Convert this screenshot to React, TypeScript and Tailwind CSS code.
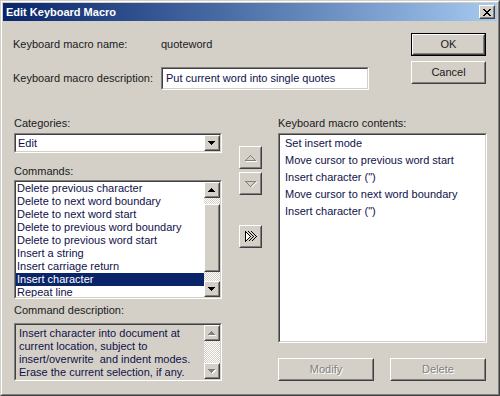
import React from "react";

const font = "font-['Liberation_Sans',Arial,sans-serif]";

function Sunken({ className = "", inner = "", children }: { className?: string; inner?: string; children?: React.ReactNode }) {
  return (
    <div className={`border border-t-[#808080] border-l-[#808080] border-b-white border-r-white ${className}`}>
      <div className={`h-full w-full border border-t-[#404040] border-l-[#404040] border-b-[#d4d0c8] border-r-[#d4d0c8] ${inner}`}>
        {children}
      </div>
    </div>
  );
}

function Raised({ className = "", children }: { className?: string; children?: React.ReactNode }) {
  return (
    <div className={`border border-t-white border-l-white border-b-[#404040] border-r-[#404040] bg-[#d4d0c8] ${className}`}>
      <div className="flex h-full w-full items-center justify-center border border-t-[#d4d0c8] border-l-[#d4d0c8] border-b-[#808080] border-r-[#808080]">
        {children}
      </div>
    </div>
  );
}

function SmallArrow({ dir, disabled }: { dir: "up" | "down"; disabled?: boolean }) {
  const rows = dir === "down" ? [0, 1, 2, 3] : [3, 2, 1, 0];
  const tri = (color: string, dx: number, dy: number) =>
    rows.map((r, i) => <rect key={color + i} x={r + dx} y={i + dy} width={7 - r * 2} height={1} fill={color} />);
  return (
    <svg width="8" height="5" shapeRendering="crispEdges">
      {disabled && tri("#ffffff", 1, 1)}
      {tri(disabled ? "#808080" : "#000000", 0, 0)}
    </svg>
  );
}

const checker =
  "bg-[repeating-conic-gradient(#ffffff_0_25%,#d4d0c8_0_50%)] bg-[length:2px_2px]";

const commands = [
  "Delete previous character",
  "Delete to next word boundary",
  "Delete to next word start",
  "Delete to previous word boundary",
  "Delete to previous word start",
  "Insert a string",
  "Insert carriage return",
  "Insert character",
  "Repeat line",
];

const contents = [
  "Set insert mode",
  "Move cursor to previous word start",
  "Insert character (\")",
  "Move cursor to next word boundary",
  "Insert character (\")",
];

export default function App() {
  return (
    <div className={`${font} h-[396px] w-[500px] select-none border border-t-[#d4d0c8] border-l-[#d4d0c8] border-b-[#404040] border-r-[#404040] bg-[#d4d0c8] text-[11px] leading-[13px] text-[#1a1a1a]`}>
      <div className="flex h-full flex-col border border-t-white border-l-white border-b-[#808080] border-r-[#808080] p-px">
        {/* title bar */}
        <div className="flex h-[18px] items-center bg-gradient-to-r from-[#0a246a] to-[#a6caf0] pl-[3px] pr-[2px]">
          <span className="font-bold text-white">Edit Keyboard Macro</span>
          <Raised className="ml-auto h-[14px] w-[16px]">
            <svg width="8" height="7" shapeRendering="crispEdges">
              <path d="M0 0h2l2 2.5L6 0h2L5 3.5 8 7H6L4 4.5 2 7H0l3-3.5z" fill="#000" />
            </svg>
          </Raised>
        </div>

        <div className="flex-1 px-[10px]">
          {/* top section */}
          <div className="flex">
            <div className="flex flex-col pt-[17px]">
              <div className="flex">
                <span className="w-[148px]">Keyboard macro name:</span>
                <span>quoteword</span>
              </div>
              <div className="mt-[16px] flex items-center">
                <span className="w-[148px]">Keyboard macro description:</span>
                <Sunken className="h-[23px] w-[208px] bg-white" inner="flex items-center pl-[3px] text-[#10104a]">
                  Put current word into single quotes
                </Sunken>
              </div>
            </div>
            <div className="ml-auto mr-px flex flex-col pt-[12px]">
              <div className="h-[23px] w-[75px] border border-black">
                <Raised className="h-full w-full">OK</Raised>
              </div>
              <Raised className="mt-[5px] h-[23px] w-[75px]">Cancel</Raised>
            </div>
          </div>

          {/* lower section */}
          <div className="mt-[27px] flex">
            <div className="ml-px flex w-[208px] flex-col">
              <span>Categories:</span>
              <Sunken className="mt-[3px] h-[20px] bg-white" inner="flex items-center">
                <span className="flex-1 pl-[2px] text-[#10104a]">Edit</span>
                <Raised className="h-full w-[16px]">
                  <SmallArrow dir="down" />
                </Raised>
              </Sunken>

              <span className="mt-[12px]">Commands:</span>
              <Sunken className="mt-[2px] h-[119px] bg-white" inner="flex">
                <div className="flex-1 overflow-hidden text-[#10104a]">
                  {commands.map((c) => (
                    <div
                      key={c}
                      className={`h-[13px] whitespace-nowrap pl-px ${c === "Insert character" ? "bg-[#0a246a] text-white" : ""}`}
                    >
                      {c}
                    </div>
                  ))}
                </div>
                <div className="flex w-[16px] flex-col">
                  <Raised className="h-[16px] w-full">
                    <SmallArrow dir="up" />
                  </Raised>
                  <div className={`h-[6px] ${checker}`} />
                  <Raised className="h-[68px] w-full" />
                  <div className={`flex-1 ${checker}`} />
                  <Raised className="h-[16px] w-full">
                    <SmallArrow dir="down" />
                  </Raised>
                </div>
              </Sunken>

              <span className="mt-[5px]">Command description:</span>
              <Sunken className="mt-[6px] h-[58px]" inner="flex">
                <div className="flex-1 whitespace-pre pl-[3px] pt-[2px] text-[#10104a]">
                  {"Insert character into document at\ncurrent location, subject to\ninsert/overwrite  and indent modes.\nErase the current selection, if any."}
                </div>
                <div className="flex w-[16px] flex-col">
                  <Raised className="h-[16px] w-full">
                    <SmallArrow dir="up" disabled />
                  </Raised>
                  <div className={`flex-1 ${checker}`} />
                  <Raised className="h-[16px] w-full">
                    <SmallArrow dir="down" disabled />
                  </Raised>
                </div>
              </Sunken>
            </div>

            {/* move buttons */}
            <div className="ml-[17px] flex w-[23px] flex-col">
              <Raised className="mt-[29px] h-[23px] w-[23px]">
                <svg width="13" height="8" shapeRendering="crispEdges">
                  <path d="M1.5 6.5L6.5 1.5L11.5 6.5Z" fill="#d4d0c8" stroke="#808080" />
                  <path d="M2 7.5H12.5" stroke="#ffffff" />
                </svg>
              </Raised>
              <Raised className="mt-[3px] h-[23px] w-[23px]">
                <svg width="13" height="8" shapeRendering="crispEdges">
                  <path d="M1.5 1.5H11.5L6.5 6.5Z" fill="#d4d0c8" stroke="#808080" />
                  <path d="M7.5 7.5L12.5 2.5" stroke="#ffffff" />
                </svg>
              </Raised>
              <Raised className="mt-[30px] h-[23px] w-[23px]">
                <svg width="13" height="13" shapeRendering="crispEdges">
                  <path d="M1.5 1.5V11.5L6.5 6.5Z" fill="#ffffff" stroke="#000" />
                  <path d="M4.5 1.5L9.5 6.5L4.5 11.5" fill="none" stroke="#000" />
                  <path d="M7.5 1.5L12.5 6.5L7.5 11.5" fill="none" stroke="#000" />
                </svg>
              </Raised>
            </div>

            {/* contents */}
            <div className="ml-[16px] flex w-[209px] flex-col">
              <span>Keyboard macro contents:</span>
              <Sunken className="mt-[3px] h-[210px] bg-white" inner="text-[#10104a]">
                {contents.map((c, i) => (
                  <div key={i} className="flex h-[17px] items-center whitespace-nowrap pl-[5px]">
                    {c}
                  </div>
                ))}
              </Sunken>
              <div className="mt-[15px] flex gap-[16px]">
                {["Modify", "Delete"].map((b) => (
                  <Raised key={b} className="h-[23px] w-[96px]">
                    <span className="text-[#808080] [text-shadow:1px_1px_0_#ffffff]">{b}</span>
                  </Raised>
                ))}
              </div>
            </div>
          </div>
        </div>
      </div>
    </div>
  );
}
